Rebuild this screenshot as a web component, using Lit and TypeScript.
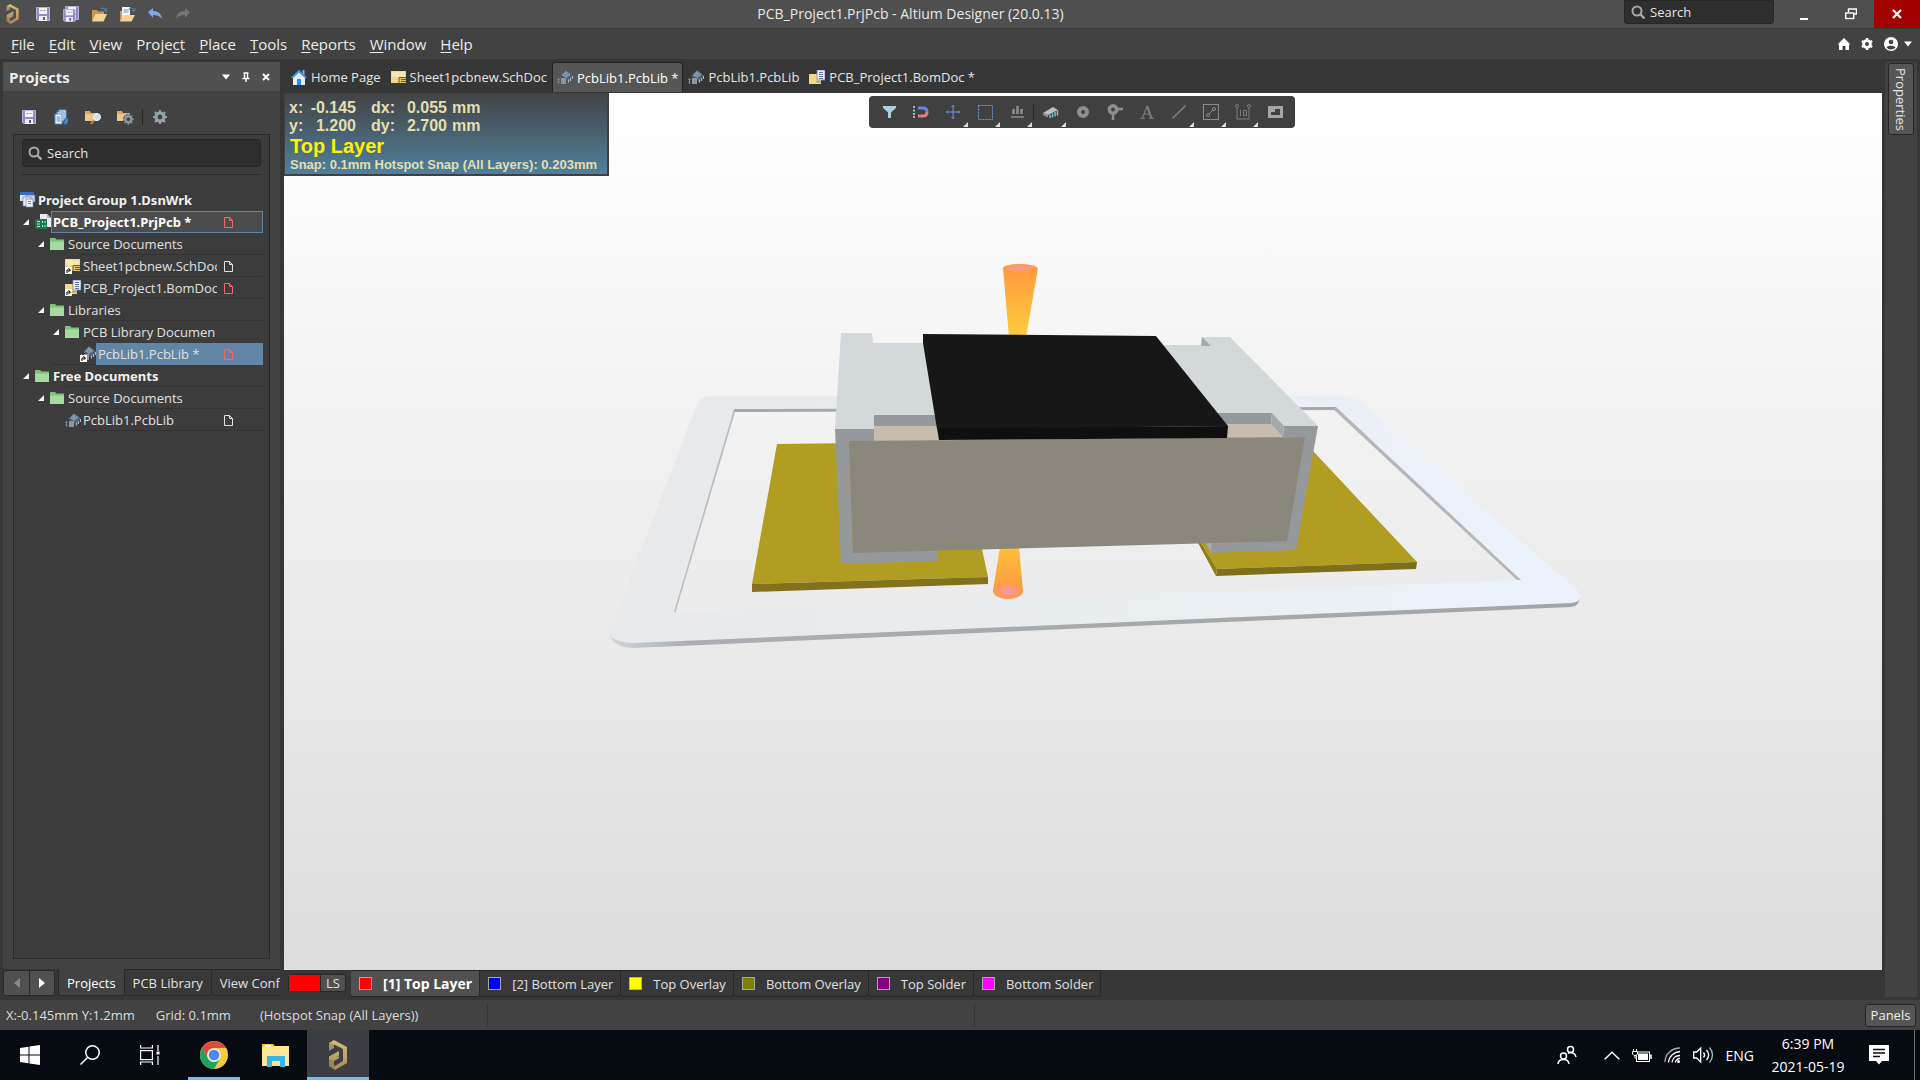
import { LitElement, html, svg, css, nothing, TemplateResult } from "lit";
import { customElement, property, state } from "lit/decorators.js";
import { classMap } from "lit/directives/class-map.js";
import { styleMap } from "lit/directives/style-map.js";

/* ---------- icons ---------- */

const icon = (w: number, h: number, body: unknown) =>
  html`<svg class="icon" width=${w} height=${h} viewBox="0 0 ${w} ${h}" aria-hidden="true">${body}</svg>`;

const altiumLogo = (w: number, h: number) => html`<svg class="icon" width=${w} height=${h} viewBox="0 0 19 30" aria-hidden="true">
  <defs><linearGradient id="gold" x1="0" y1="0" x2="0" y2="1"><stop offset="0" stop-color="#d6bd7c" /><stop offset="1" stop-color="#a88e52" /></linearGradient></defs>
  <path d="M0 3 5 0l13 7v16L6 30l-6-4v-5l10-5V11L0 16.500v4L1 21l9-5.500V18l-5 3v4l1 1 8-5V9L5 4.500V8L0 10.500z" fill="url(#gold)" />
  <path d="M0 3 5 4.500V8L0 10.500zM0 21l5 0v4l1 5-6-4z" fill="#8d7440" opacity=".55" />
</svg>`;

const floppy = svg`<path d="M0.500 0.500h13v13h-12l-1-1z" fill="#8f8bc4" stroke="#b5b2de" /><rect x="3" y="1" width="8" height="6" fill="#f3f3f6" /><rect x="4" y="3" width="6" height="1" fill="#b4b4c0" /><rect x="3" y="9" width="8" height="5" fill="#f1f1f4" /><rect x="7" y="10" width="2" height="3" fill="#5d5a86" />`;
const folderOpen = svg`<path d="M1 15V4h5l1 1.500h6V8" fill="#c69a55" /><path d="M1 15.500 4.500 8H16l-3.500 7.500z" fill="#f5d493" />`;
const arcArrow = svg`<path d="M10 3.500c2-2 4-1.500 5 .5M13 4.500l2.500 .5.500-2.500" fill="none" stroke="#4f7f9f" stroke-width="1.200" />`;
const folderSolid = svg`<path d="M0 2h5l1 2h7v8H0z" fill="#d9ac69" /><path d="M0 5h13v7H0z" fill="#ecc68a" />`;
const cog = (c: string) => svg`<circle cx="7" cy="7" r="4" fill="none" stroke=${c} stroke-width="3.200" /><path d="M7 0v2M7 12v2M0 7h2M12 7h2M2 2l1.500 1.500M10.500 10.500 12 12M2 12l1.500-1.500M10.500 3.500 12 2" stroke=${c} stroke-width="2.200" />`;
const chip = svg`<path d="M3 6 9 0l7 5.500-5.500 5.500z" fill="#4d6176" /><path d="M5 5 9 1l4.500 3.500L9.500 8z" fill="#8ba1b5" /><path d="m7 4 4 3M9 2.500l3.500 3" stroke="#5d7186" stroke-width=".8" /><path d="M11.500 9.500v3M13.500 8v3M15.500 6v3" stroke="#a7bccd" stroke-width="1.200" /><rect x="4" y="8" width="5" height="6" fill="#8f979e" /><path d="M0 9.500h3M0 12h3M1.500 8v6" stroke="#75808a" />`;
const sheet = svg`<rect x="0" y="1" width="15" height="12" fill="#f1d88d" /><rect x="1" y="2" width="13" height="5" fill="#f8e6b0" /><path d="M8 8h7v5H8z" fill="#e4c467" /><path d="M8 13V7.500h7M10 9.500h5M10 11.500h5" fill="none" stroke="#6a5b30" />`;
const bom = svg`<rect x="0" y="4" width="12" height="10" fill="#f1d88d" /><rect x="8" y="0" width="8" height="10" fill="#e9edf7" stroke="#7785b5" stroke-width=".8" /><path d="M10 2.500h4M10 4.500h4M10 6.500h4M10 8.500h4" stroke="#6676ad" /><path d="M7 12h5" stroke="#9d8848" />`;
const shortcut = svg`<rect x="0" y="9" width="7" height="7" fill="#fff" /><path d="M2 15v-3h3M3.500 10.500 5.500 12l-2 2" fill="none" stroke="#000" />`;
const greenFolder = svg`<path d="M0 1h5l1.500 1.500H14V13H0z" fill="#7fbf7b" /><path d="M0 4.500h14V13H0z" fill="#a5dba0" />`;

const icons: Record<string, TemplateResult> = {
  save: icon(14, 14, floppy),
  saveAll: icon(16, 16, svg`<g transform="translate(2 0)">${floppy}</g><g transform="translate(0 3) scale(.9)">${floppy}</g>`),
  open: icon(17, 17, svg`${folderOpen}${arcArrow}`),
  openProject: icon(17, 17, svg`<path d="M1 15V5h3v10z" fill="#c69a55" /><rect x="3" y="1" width="8" height="11" fill="#f4f6fa" /><path d="M4.500 4h5M4.500 6h5" stroke="#7a8fae" /><path d="M1 15.500 4.500 9H16l-3.500 6.500z" fill="#f5d493" />${arcArrow}`),
  undo: icon(16, 14, svg`<path d="M1 5 6 1v3c5 0 8 2 9 8-2-3-5-4-9-4v3z" fill="#7fa8e6" />`),
  redo: icon(16, 14, svg`<path d="M15 5 10 1v3C5 4 2 6 1 12c2-3 5-4 9-4v3z" fill="#757575" />`),
  lens: icon(14, 14, svg`<circle cx="6" cy="6" r="4.500" fill="none" stroke="#a8a8a8" stroke-width="2" /><path d="m9.500 9.500 4 4" stroke="#a8a8a8" stroke-width="2.400" />`),
  copyDocs: icon(14, 16, svg`<rect x="5" y="1" width="7" height="9" fill="#dcecfa" stroke="#5b91c6" /><rect x="3" y="3" width="7" height="9" fill="#e6f1fb" stroke="#5b91c6" /><rect x="1" y="5" width="7" height="10" fill="#f2f8fd" stroke="#4b86c0" /><path d="M2.500 8h4M2.500 10h4M2.500 12h4" stroke="#4b86c0" /><path d="M9 13h2V9.500h3V13l-3 3z" fill="#3c86d2" />`),
  folderFind: icon(17, 16, svg`${folderSolid}<circle cx="12" cy="8" r="3.500" fill="#cfe3f3" stroke="#eef5fa" /><path d="m9 11-3 4" stroke="#c08f4a" stroke-width="2" />`),
  folderCog: icon(17, 16, svg`${folderSolid}<g transform="translate(6 5) scale(.76)"><circle cx="7" cy="7" r="7" fill="#424242" />${cog("#8a989e")}</g>`),
  cog: icon(14, 14, cog("#93a3ab")),
  caret: icon(8, 6, svg`<path d="M0 .500h8L4 5.500z" fill="#fff" />`),
  pin: icon(8, 10, svg`<path d="M1.500 1h5M2.500 1v5M5.500 1v5M0.500 6.500h7M4 6v4" fill="none" stroke="#fff" stroke-width="1.400" />`),
  cross: icon(8, 8, svg`<path d="m1 1 6 6M7 1 1 7" stroke="#fff" stroke-width="2" />`),
  home: icon(16, 16, svg`<path d="M2 8v8h12V8L8 2z" fill="#e6eef7" /><path d="M11.500 1h2v5h-2z" fill="#7cb3ea" /><path d="M0 8.500 8 .5l8 8-1.500 1L8 3.500 1.500 9.500z" fill="#3f8fe0" /><rect x="6" y="10" width="4" height="6" fill="#2b8cf0" />`),
  chip: icon(16, 15, chip),
  sheet: icon(15, 14, sheet),
  bom: icon(16, 14, bom),
  chipLink: icon(16, 16, svg`${chip}${shortcut}`),
  sheetLink: icon(16, 16, svg`${sheet}${shortcut}`),
  bomLink: icon(16, 16, svg`${bom}${shortcut}`),
  folder: icon(16, 14, greenFolder),
  group: icon(16, 16, svg`<rect x="0" y="0" width="14" height="9" fill="#dce5f2" /><rect x="0" y="0" width="14" height="3" fill="#3d6cbe" /><rect x="6" y="3" width="9" height="7" fill="#c8d4e6" stroke="#5570a0" stroke-width=".6" /><rect x="3" y="5" width="8" height="9" fill="#eaf0f8" stroke="#6a84b0" stroke-width=".7" /><rect x="6" y="7" width="7" height="8" fill="#f4f7fb" stroke="#6a84b0" stroke-width=".7" /><path d="M8 9.500h3M8 11.500h3" stroke="#6a84b0" />`),
  project: icon(16, 16, svg`<path d="M5 0h7l4 4v9H5z" fill="#e9ecf5" /><path d="M12 0v4h4z" fill="#a9b2cf" /><rect x="0" y="5" width="12" height="10" fill="#14784f" /><path d="M2 7.500h3M2 10h3M2 12.500h3M7.500 7v2M10 7v2M7.500 11v2M10 11v2" fill="none" stroke="#cfe9dc" />`),
  doc: icon(9, 11, svg`<path d="M.5.500h5l3 3v7h-8z M5.500.500v3h3" fill="none" stroke="#e2e2e2" />`),
  docRed: icon(9, 11, svg`<path d="M.5.500h5l3 3v7h-8z M5.500.500v3h3" fill="none" stroke="#f06a6a" />`),
  twist: icon(6, 6, svg`<path d="M6 0v6H0z" fill="#f4f4f4" />`),
  filter: icon(13, 12, svg`<path d="M0 0h13v2L8 6.500V12H5V6.500L0 2z" fill="#a9d0e2" />`),
  magnet: icon(16, 12, svg`<path d="M0 0h2v2H0zM0 3.500h2v2H0zM0 7h2v2H0zM0 10h2v2H0z" fill="#9fb9c4" /><path d="M5 2h5c3 0 4 2 4 4" fill="none" stroke="#5f86e8" stroke-width="3" /><path d="M5 10h5c3 0 4-2 4-4" fill="none" stroke="#e87b84" stroke-width="3" />`),
  crosshair: icon(14, 14, svg`<path d="M7 0v14M0 7h14M5.500 2 7 .5 8.500 2M5.500 12 7 13.500 8.500 12M2 5.500.5 7 2 8.500M12 5.500 13.500 7 12 8.500" fill="none" stroke="#6e93e2" />`),
  marquee: icon(15, 15, svg`<rect x=".5" y=".5" width="14" height="14" fill="none" stroke="#6e93e2" stroke-dasharray="2 1" />`),
  align: icon(13, 12, svg`<path d="M0 11h13" stroke="#8b8b8b" stroke-width="1.500" /><path d="M2.500 3v5M6.500 0v8M10.500 3v5" stroke="#8b8b8b" stroke-width="2.600" />`),
  ic: icon(16, 12, svg`<path d="M0 7 10 1l5 3-10 5z" fill="#bcc0c4" /><path d="M0 7v2l5 2.500V9z" fill="#8e9499" /><path d="M7 8.500v3.500M9.500 7.500v4M12 6v4.500M14.500 4.500v5" stroke="#7fc4de" stroke-width="1.400" />`),
  pad: icon(12, 12, svg`<circle cx="6" cy="6" r="4" fill="none" stroke="#8f8f8f" stroke-width="4" />`),
  via: icon(16, 16, svg`<path d="M6 5h10M6 6v10" stroke="#8f8f8f" stroke-width="2.500" /><circle cx="6" cy="5.500" r="3.700" fill="#404040" stroke="#8f8f8f" stroke-width="3.500" />`),
  letter: icon(14, 14, svg`<path d="M7 1 2.500 13" stroke="#7c7c7c" stroke-width="1.200" /><path d="m7 1 4.500 12" stroke="#7c7c7c" stroke-width="2.200" /><path d="M4 9h6M0 13.300h5M9 13.300h5" stroke="#7c7c7c" />`),
  line: icon(14, 14, svg`<path d="M.5 13.500 13.500.5" stroke="#7c7c7c" stroke-width="1.600" />`),
  room: icon(16, 16, svg`<rect x=".5" y=".5" width="15" height="15" fill="none" stroke="#8b8b8b" /><circle cx="5" cy="11" r="1.500" fill="none" stroke="#8b8b8b" /><circle cx="11" cy="5" r="1.500" fill="none" stroke="#8b8b8b" /><path d="m6 10 4-4" stroke="#8b8b8b" />`),
  dimension: icon(16, 16, svg`<circle cx="2" cy="2" r="1.500" fill="none" stroke="#7c7c7c" /><circle cx="14" cy="2" r="1.500" fill="none" stroke="#7c7c7c" /><path d="M2 4v11h12V4M5.500 6v6M8.500 6.500h3v5h-3z" fill="none" stroke="#7c7c7c" />`),
  cutout: icon(15, 12, svg`<path d="M0 0h15v12H0zM7 3v3H3v3h9V3z" fill="#a5a5a5" fill-rule="evenodd" />`),
  minimize: icon(8, 12, svg`<path d="M0 11h8" stroke="#fff" stroke-width="2" />`),
  restore: icon(12, 12, svg`<path d="M3.500 4V1h8v5H9" fill="none" stroke="#fff" stroke-width="1.400" /><rect x=".7" y="5" width="8" height="5.500" fill="none" stroke="#fff" stroke-width="1.400" />`),
  close: icon(10, 10, svg`<path d="m1 1 8 8M9 1 1 9" stroke="#fff" stroke-width="2.200" />`),
  homeWhite: icon(12, 12, svg`<path d="M0 6 6 0l6 6-1 1v5H7.500V8h-3v4H1V7z" fill="#fff" />`),
  cogWhite: icon(12, 12, svg`<circle cx="6" cy="6" r="3.400" fill="none" stroke="#fff" stroke-width="2.800" /><path d="M6 0v3M6 9v3M.8 3l2.600 1.500M8.600 7.500 11.200 9M.8 9l2.600-1.500M8.600 4.500 11.200 3" stroke="#fff" stroke-width="2.400" />`),
  user: icon(14, 14, svg`<circle cx="7" cy="7" r="7" fill="#fff" /><circle cx="7" cy="5" r="2.300" fill="#424242" /><path d="M2.500 10.500c1-2.500 8-2.500 9 0-2 2.500-7 2.500-9 0z" fill="#424242" />`),
  left: icon(6, 10, svg`<path d="M6 0v10L0 5z" fill="#8a8a8a" />`),
  right: icon(6, 10, svg`<path d="M0 0v10l6-5z" fill="#fff" />`),
  windows: icon(20, 20, svg`<path d="m0 3 8.500-1.200V9.500H0zM9.500 1.600 20 0v9.500H9.500zM0 10.500h8.500v7.700L0 17zM9.500 10.500H20V20L9.500 18.400z" fill="#fff" />`),
  find: icon(20, 20, svg`<circle cx="12.500" cy="7.500" r="6.700" fill="none" stroke="#fff" stroke-width="1.500" /><path d="M7.500 12.500.5 19.500" stroke="#fff" stroke-width="1.500" />`),
  taskView: icon(20, 20, svg`<path d="M.6 0v3h11.800V0M.6 20v-3h11.800v3" fill="none" stroke="#fff" stroke-width="1.200" /><rect x=".6" y="5.600" width="11.800" height="9" fill="none" stroke="#fff" stroke-width="1.200" /><path d="M18 0v6M18 11v9" stroke="#fff" stroke-width="1.200" /><rect x="16.500" y="6.500" width="3" height="3" fill="#fff" />`),
  chrome: icon(28, 28, svg`<circle cx="14" cy="14" r="14" fill="#fbc940" /><path d="M1.900 7A14 14 0 0 1 26.100 7H14a7 7 0 0 0-6.100 10.500z" fill="#dc4b3e" /><path d="M1.900 7A14 14 0 0 0 14 28l6.100-10.500A7 7 0 0 1 7.900 17.500z" fill="#1da462" /><circle cx="14" cy="14" r="6.700" fill="#f1f1f1" /><circle cx="14" cy="14" r="5.300" fill="#4a8af4" />`),
  explorer: icon(28, 24, svg`<path d="M0 1h11l2 2v4H0z" fill="#f9c937" /><rect x="3" y="2" width="6" height="2" fill="#fff" /><path d="M0 4h11l2-1h14v20H0z" fill="#ffe594" /><path d="M5 24V13h18v11h-5v-6h-8v6z" fill="#3bb4e8" />`),
  people: icon(20, 20, svg`<g fill="none" stroke="#fff" stroke-width="1.500"><circle cx="6.500" cy="11" r="3" /><path d="M1 19c.5-6 10.500-6 11 0" /><circle cx="13.500" cy="4.500" r="3" /><path d="M11 8.500c3-2 7.500-.5 8 3.500" /></g>`),
  chevron: icon(16, 9, svg`<path d="m.7 8.300 7.300-7 7.300 7" fill="none" stroke="#fff" stroke-width="1.400" />`),
  battery: icon(20, 13, svg`<rect x="4.500" y="3" width="13" height="9.500" fill="none" stroke="#fff" /><rect x="6" y="4.500" width="10" height="6.500" fill="#fff" /><path d="M19 5.500v4.500" stroke="#fff" stroke-width="1.600" /><path d="M.5 2.500h5v2.500L4 6.500H2L.5 5zM1.500 0v3M4.500 0v3M3 6.500V9h2" fill="#070b12" stroke="#fff" />`),
  wifi: icon(17, 16, svg`<g fill="none" stroke-width="1.300"><path d="M1 15C1 7 8 1 16 1" stroke="#a9abae" /><path d="M4.500 15.500C5 9 10 5 16 4.500" stroke="#fff" /><path d="M8 15.500c.5-4 3.500-7 8-7" stroke="#fff" /><path d="M11.500 15.500c0-2 2-4 4.500-4" stroke="#fff" /></g><circle cx="14.500" cy="14.500" r="1.500" fill="#fff" />`),
  volume: icon(21, 18, svg`<path d="M.7 6h3l4-4v14l-4-4h-3z" fill="none" stroke="#fff" stroke-width="1.300" /><g fill="none" stroke="#fff" stroke-width="1.300"><path d="M10.500 6.500c1.300 1.500 1.300 3.500 0 5" /><path d="M13.500 4c2.600 3 2.600 7 0 10" /><path d="M16.500 1.500c4 4.500 4 10.500 0 15" stroke="#b5b7ba" /></g>`),
  notify: icon(20, 20, svg`<path d="M0 0h20v16h-7l-3 3.500L7 16H0z" fill="#fff" /><path d="M4 4.500h12M4 8h12M4 11.500h7" stroke="#0a0e15" stroke-width="1.300" />`),
};

/* ---------- shared look ---------- */

const base = css`
  * { box-sizing: border-box; }
  .icon { display: block; flex: none; }
  button, input {
    font: inherit;
    color: inherit;
    background: none;
    border: 0;
    padding: 0;
    margin: 0;
    white-space: nowrap;
  }
  input::placeholder { color: #e4e4e4; opacity: 1; }
  .search {
    display: flex;
    align-items: center;
    gap: 5px;
    background: #2e2e2e;
    border: 1px solid #262626;
    border-radius: 3px;
    color: #e4e4e4;
  }
  .search input { flex: 1; min-width: 0; outline: 0; }
`;

/* ---------- title bar and menu ---------- */

@customElement("title-bar")
class TitleBar extends LitElement {
  static styles = [base, css`
    :host { display: block; }
    .title {
      display: grid;
      grid-template-columns: auto 1fr auto;
      align-items: center;
      height: 28px;
      background: #4f4f4f;
      color: #e8e8e8;
    }
    .quick { display: flex; align-items: center; padding-left: 6px; }
    .quick button { width: 28px; height: 28px; display: grid; place-items: center; }
    .logo { width: 23px; }
    h1 { font-size: 14px; font-weight: 400; margin: 0; line-height: 28px; text-align: center; }
    .end { display: flex; align-self: stretch; align-items: flex-start; }
    .search { width: 150px; height: 24px; padding-left: 6px; margin-right: 6px; font-size: 13px; border-radius: 0 0 3px 3px; }
    .win { width: 47px; height: 28px; display: grid; place-items: center; }
    .close { background: #a00000; width: 46px; }
    .menu {
      display: flex;
      align-items: center;
      height: 31px;
      padding: 0 8px 0 11px;
      gap: 14px;
      background: #424242;
      border-top: 1px solid #363636;
      color: #ececec;
      font-size: 15px;
    }
    .menu u { text-underline-offset: 2px; text-decoration-thickness: 1px; }
    .tools { margin-left: auto; display: flex; align-items: center; gap: 11px; }
    .account { display: flex; align-items: center; gap: 6px; }
  `];

  private menus: [string, string, string][] = [
    ["", "F", "ile"], ["", "E", "dit"], ["", "V", "iew"], ["Proje", "c", "t"], ["", "P", "lace"],
    ["", "T", "ools"], ["", "R", "eports"], ["", "W", "indow"], ["", "H", "elp"],
  ];
  private quick: [string, string][] = [
    ["save", "Save"], ["saveAll", "Save all"], ["open", "Open"], ["openProject", "Open project"], ["undo", "Undo"], ["redo", "Redo"],
  ];

  render() {
    return html`
      <header class="title">
        <div class="quick">
          <div class="logo">${altiumLogo(14, 20)}</div>
          ${this.quick.map(([i, l]) => html`<button aria-label=${l}>${icons[i]}</button>`)}
        </div>
        <h1>PCB_Project1.PrjPcb - Altium Designer (20.0.13)</h1>
        <div class="end">
          <label class="search">${icons.lens}<input type="text" placeholder="Search" aria-label="Search" /></label>
          <button class="win" aria-label="Minimize">${icons.minimize}</button>
          <button class="win" aria-label="Restore">${icons.restore}</button>
          <button class="win close" aria-label="Close">${icons.close}</button>
        </div>
      </header>
      <nav class="menu">
        ${this.menus.map(([a, u, b]) => html`<button>${a}<u>${u}</u>${b}</button>`)}
        <div class="tools">
          <button aria-label="Home">${icons.homeWhite}</button>
          <button aria-label="Preferences">${icons.cogWhite}</button>
          <button class="account" aria-label="Account">${icons.user}${icons.caret}</button>
        </div>
      </nav>`;
  }
}

/* ---------- projects panel ---------- */

interface Node {
  level: number;
  icon: string;
  text: string;
  open?: boolean;
  bold?: boolean;
  mark?: "doc" | "docRed";
  look?: "framed" | "selected";
  rule?: number;
}

const tree: Node[] = [
  { level: 0, icon: "group", text: "Project Group 1.DsnWrk", bold: true },
  { level: 1, icon: "project", text: "PCB_Project1.PrjPcb *", bold: true, open: true, mark: "docRed", look: "framed" },
  { level: 2, icon: "folder", text: "Source Documents", open: true, rule: 4 },
  { level: 3, icon: "sheetLink", text: "Sheet1pcbnew.SchDoc", mark: "doc", rule: 4 },
  { level: 3, icon: "bomLink", text: "PCB_Project1.BomDoc", mark: "docRed", rule: 4 },
  { level: 2, icon: "folder", text: "Libraries", open: true, rule: 4 },
  { level: 3, icon: "folder", text: "PCB Library Documen", open: true },
  { level: 4, icon: "chipLink", text: "PcbLib1.PcbLib *", mark: "docRed", look: "selected", rule: 2 },
  { level: 1, icon: "folder", text: "Free Documents", bold: true, open: true, rule: 3 },
  { level: 2, icon: "folder", text: "Source Documents", open: true, rule: 4 },
  { level: 3, icon: "chip", text: "PcbLib1.PcbLib", mark: "doc", rule: 4 },
];

@customElement("projects-panel")
class ProjectsPanel extends LitElement {
  @state() private tab = "Projects";

  static styles = [base, css`
    :host {
      display: flex;
      flex-direction: column;
      width: 280px;
      padding: 3px 0 0 3px;
      color: #e0e0e0;
      font-size: 13px;
      min-height: 0;
    }
    .head {
      display: flex;
      align-items: center;
      gap: 12px;
      height: 29px;
      padding: 0 10px 0 6px;
      background: #505050;
    }
    h2 { font-size: 15px; margin: 0 auto 0 0; font-weight: 700; color: #ececec; }
    .body {
      flex: 1;
      min-height: 0;
      display: flex;
      flex-direction: column;
      background: #424242;
      padding: 12px 10px 10px;
    }
    .tools { display: flex; align-items: center; height: 28px; margin-bottom: 3px; }
    .tools button { width: 32px; height: 28px; display: grid; place-items: center; }
    .tools i { width: 1px; height: 16px; background: #262626; margin: 0 1px; }
    .box { flex: 1; border: 1px solid #2a2a2a; background: #3c3c3c; padding: 4px 6px 0; }
    .search { height: 28px; padding-left: 5px; margin: 0 2px; }
    .rule { border: 0; border-top: 1px solid #2a2a2a; margin: 7px 2px 14px; }
    ul { list-style: none; margin: 0; padding: 0; }
    .row {
      display: flex;
      align-items: center;
      width: 100%;
      height: 22px;
      text-align: left;
    }
    .twist { width: 15px; flex: none; padding-left: 3px; }
    .pic { width: 16px; height: 16px; flex: none; display: grid; place-items: center; }
    .cell {
      flex: 1;
      min-width: 0;
      height: 22px;
      display: flex;
      align-items: center;
      padding-left: 2px;
      border: 1px solid transparent;
      border-left: 0;
    }
    .name { flex: 1; min-width: 0; overflow: hidden; }
    .mark { width: 45px; padding-left: 7px; flex: none; }
    .bold { font-family: "Noto Sans", "Open Sans", sans-serif; font-weight: 700; color: #f0f0f0; }
    .framed { border: 1px solid #6285a5; background: #4c4c4c; color: #fff; padding-left: 1px; }
    .selected { background: #6285a5; border-color: #6285a5; }
    .line { height: 1px; margin-top: -1px; background: #333; }
    .tabs { display: flex; height: 31px; overflow: hidden; }
    .step {
      flex: none;
      display: grid;
      grid-template-columns: 1fr 1fr;
      width: 52px;
      height: 26px;
      margin: 1px 3px 0 0;
      background: #505050;
      border: 1px solid #282828;
      border-radius: 3px;
    }
    .step button { display: grid; place-items: center; }
    .step button + button { border-left: 1px solid #282828; }
    .tab {
      flex: none;
      height: 27px;
      padding: 0 8px;
      border: 1px solid #282828;
      border-left-width: 0;
      border-radius: 0 0 3px 3px;
      background: #383838;
    }
    .tab.on { background: #424242; border-top-color: #424242; border-left-width: 1px; color: #fff; }
  `];

  render() {
    return html`
      <div class="head">
        <h2>Projects</h2>
        <button aria-label="Panel menu">${icons.caret}</button>
        <button aria-label="Pin">${icons.pin}</button>
        <button aria-label="Close panel">${icons.cross}</button>
      </div>
      <div class="body">
        <div class="tools">
          ${["save", "copyDocs", "folderFind", "folderCog"].map((i) => html`<button aria-label=${i}>${icons[i]}</button>`)}
          <i></i>
          <button aria-label="Settings">${icons.cog}</button>
        </div>
        <div class="box">
          <label class="search">${icons.lens}<input type="text" placeholder="Search" aria-label="Search projects" /></label>
          <hr class="rule" />
          <ul role="tree">
            ${tree.map((n) => html`<li role="treeitem">
              <button class="row" style=${styleMap({ paddingLeft: `${Math.max(n.level - 1, 0) * 15}px` })}>
                ${n.level ? html`<span class="twist">${n.open ? icons.twist : nothing}</span>` : nothing}
                <span class="pic">${icons[n.icon]}</span>
                <span class=${classMap({ cell: true, bold: !!n.bold, [n.look ?? "plain"]: true })}>
                  <span class="name">${n.text}</span>
                  ${n.level ? html`<span class="mark">${n.mark ? icons[n.mark] : nothing}</span>` : nothing}
                </span>
              </button>
              ${n.rule ? html`<div class="line" style=${styleMap({ marginLeft: `${n.rule * 15 + 1}px` })}></div>` : nothing}
            </li>`)}
          </ul>
        </div>
      </div>
      <div class="tabs">
        <div class="step">
          <button aria-label="Previous tab">${icons.left}</button>
          <button aria-label="Next tab">${icons.right}</button>
        </div>
        ${["Projects", "PCB Library", "View Conf"].map((t) => html`
          <button class=${classMap({ tab: true, on: t === this.tab })} @click=${() => (this.tab = t)}>${t}</button>`)}
      </div>`;
  }
}

/* ---------- 3D view ---------- */

@customElement("board-view")
class BoardView extends LitElement {
  static styles = [base, css`
    :host {
      display: block;
      position: relative;
      overflow: hidden;
      min-height: 0;
      background: linear-gradient(#ffffff, #dddddd);
    }
    .scene { display: block; position: absolute; inset: 0; width: 100%; height: 100%; }
    .hud {
      position: absolute;
      left: 0;
      top: 0;
      width: 325px;
      height: 83px;
      padding: 6px 5px 0 4px;
      border: solid #404040;
      border-width: 0 2px 2px 1px;
      background: linear-gradient(#434343, #50809d);
      color: #e2dfb0;
      font: 700 16px/18px "Liberation Sans", Arial, sans-serif;
    }
    .coords { display: grid; grid-template-columns: 18px 49px 38px 53px auto; }
    .coords span { text-align: right; }
    .coords .delta { padding-left: 15px; }
    .coords em { font-style: normal; padding-left: 5px; }
    .layer { color: #fff200; font-size: 20px; line-height: 22px; padding-left: 1px; }
    .snap { font-size: 13px; line-height: 15px; padding-left: 1px; white-space: nowrap; }
    .bar {
      position: absolute;
      left: 585px;
      top: 3px;
      display: flex;
      height: 32px;
      padding: 0 4px;
      background: #404040;
      border-radius: 4px;
    }
    .bar button { position: relative; width: 32px; height: 32px; display: grid; place-items: center; }
    .bar .more::after {
      content: "";
      position: absolute;
      right: 1px;
      bottom: 1px;
      border-left: 5px solid transparent;
      border-bottom: 5px solid #dcdcdc;
    }
    .bar i { width: 1px; height: 16px; margin: 8px 1px 8px 0; background: #262626; }
  `];

  private tools: [string, boolean][] = [
    ["filter", false], ["magnet", false], ["crosshair", true], ["marquee", true], ["align", true],
    ["ic", true], ["pad", false], ["via", false], ["letter", false], ["line", true], ["room", true], ["dimension", true], ["cutout", false],
  ];

  render() {
    return html`
      <svg class="scene" viewBox="284 93 1598 877" preserveAspectRatio="xMidYMid slice" role="img" aria-label="Chip resistor footprint, 3D view">
        <defs>
          <linearGradient id="ring" x1="0" x2="1"><stop offset="0" stop-color="#e7e9eb" /><stop offset=".25" stop-color="#e8ebee" /><stop offset=".55" stop-color="#e9eef1" /><stop offset="1" stop-color="#edf3fc" /></linearGradient>
          <linearGradient id="edge" x1="0" x2="1"><stop offset="0" stop-color="#cdd4da" /><stop offset=".08" stop-color="#abafb3" /><stop offset=".6" stop-color="#a6a8aa" /><stop offset="1" stop-color="#a3a6a8" /></linearGradient>
          <linearGradient id="coneTop" x1="0" y1="0" x2="0" y2="1"><stop offset="0" stop-color="#ff9b40" /><stop offset=".4" stop-color="#ffae3e" /><stop offset="1" stop-color="#fccd3c" /></linearGradient>
          <linearGradient id="coneLow" x1="0" y1="0" x2="0" y2="1"><stop offset="0" stop-color="#fbbf3c" /><stop offset="1" stop-color="#ff9a40" /></linearGradient>
          <radialGradient id="glow"><stop offset="0" stop-color="#f896b4" /><stop offset="1" stop-color="#ff9b40" /></radialGradient>
        </defs>
        <path d="M610 634 Q612 647 633 648 L1571 607 Q1580 606 1580 596 L1570 600 L633 640 Z" fill="url(#edge)" />
        <path fill="url(#ring)" fill-rule="evenodd" d="M715 396 L1342 396 Q1354 396 1362 402 L1577 590 Q1586 601 1571 603 L634 643 Q606 642 611 629 L697 404 Q700 396 715 396 Z M734 409 L675 612 L1521 580 L1336 407 Z" />
        <polygon points="734,409 1336,407 1336,410 734,412" fill="#a6a8aa" />
        <polygon points="734,409 735,412 675.500,612 674,612" fill="#b9bdc0" />
        <polygon points="1336,407 1521,580 1517,580 1333,409" fill="#b4b6b7" />

        <polygon points="777,444 860,443 982,549 988,577 752,584" fill="#b19d22" />
        <polygon points="752,584 988,577 988,584 752,592" fill="#83711c" />
        <polygon points="1313,451 1417,562 1217,569 1200,541" fill="#b19d22" />
        <polygon points="1217,569 1417,562 1416,569 1216,576" fill="#7f6f18" />
        <polygon points="1197,541 1200,541 1217,569 1216,576" fill="#8d7d1c" />

        <polygon points="1000,547 1019,547 1023,591 993,591" fill="url(#coneLow)" />
        <ellipse cx="1008" cy="591" rx="15" ry="8" fill="url(#glow)" />
        <polygon points="1003,268 1038,268 1026,337 1009,337" fill="url(#coneTop)" />
        <ellipse cx="1020" cy="268" rx="17" ry="4" fill="url(#glow)" />

        <polygon points="841,333 872,333 873,343 925,343 937,415 874,415 874,429 835,429" fill="#d3d8db" />
        <polygon points="835,429 874,429 874,441 849,441 853,552 938,550 938,561 841,564" fill="#95999c" />
        <polygon points="874,415 937,415 937,426 874,426" fill="#95999c" />
        <polygon points="874,426 937,426 940,442 874,442" fill="#c7bdae" />

        <polygon points="1163,345 1201,345 1202,337 1230,337 1318,426 1284,426 1272,413 1218,413" fill="#d3d8db" />
        <polygon points="1202,337 1211,346 1201,346" fill="#a5aaad" />
        <polygon points="1215,413 1272,413 1271,424 1223,424" fill="#95999c" />
        <polygon points="1272,413 1284,426 1283,438 1271,424" fill="#a5a9ac" />
        <polygon points="1223,424 1271,424 1283,438 1226,438" fill="#c7bdae" />
        <polygon points="1284,426 1318,426 1296,550 1211,553 1211,540 1287,540 1304,437 1283,437" fill="#95999c" />
        <polygon points="1205,541 1212,541 1211,553" fill="#a9adb0" />

        <polygon points="849,441 1305,437 1287,541 853,553" fill="#8c877c" />
        <polygon points="923,334 1156,336 1228,426 937,429 923,343" fill="#171717" />
        <polygon points="937,428 1228,426 1227,438 939,440" fill="#0f0f0f" />
      </svg>
      <div class="hud">
        <div class="coords">
          <b>x:</b><span>-0.145</span><b class="delta">dx:</b><span>0.055</span><em>mm</em>
          <b>y:</b><span>1.200</span><b class="delta">dy:</b><span>2.700</span><em>mm</em>
        </div>
        <div class="layer">Top Layer</div>
        <div class="snap">Snap: 0.1mm Hotspot Snap (All Layers): 0.203mm</div>
      </div>
      <div class="bar" role="toolbar">
        ${this.tools.map(([i, more], n) => html`${n === 5 ? html`<i></i>` : nothing}<button class=${more ? "more" : ""} aria-label=${i}>${icons[i]}</button>`)}
      </div>`;
  }
}

/* ---------- layer strip ---------- */

@customElement("layer-strip")
class LayerStrip extends LitElement {
  @state() private active = 0;

  static styles = [base, css`
    :host { display: flex; height: 30px; padding-left: 4px; font-size: 13px; color: #e0e0e0; }
    .set { display: flex; height: 18px; margin: 4px 5px 0 0; border: 1px solid #282828; border-radius: 3px; background: #505050; }
    .set i { width: 32px; background: #f00; border-right: 1px solid #282828; }
    .set span { width: 24px; text-align: center; line-height: 16px; }
    .layer {
      display: flex;
      align-items: center;
      gap: 11px;
      height: 27px;
      padding: 0 7px 0 8px;
      border: 1px solid #262626;
      border-left-width: 0;
      border-radius: 0 0 3px 3px;
      background: #383838;
    }
    .on { background: #505050; font-size: 14px; font-weight: 700; color: #fff; }
    .swatch { width: 13px; height: 13px; border: 1px solid #a8a8a8; margin-bottom: 1px; }
  `];

  private layers: [string, string][] = [
    ["[1] Top Layer", "#ff0000"], ["[2] Bottom Layer", "#0000ff"], ["Top Overlay", "#ffff00"],
    ["Bottom Overlay", "#808000"], ["Top Solder", "#800080"], ["Bottom Solder", "#ff00ff"],
  ];

  render() {
    return html`
      <button class="set" aria-label="Layer sets"><i></i><span>LS</span></button>
      ${this.layers.map(([name, color], i) => html`
        <button class=${classMap({ layer: true, on: i === this.active })} @click=${() => (this.active = i)}>
          <span class="swatch" style=${styleMap({ background: color })}></span>${name}
        </button>`)}`;
  }
}

/* ---------- desktop task bar ---------- */

@customElement("task-bar")
class TaskBar extends LitElement {
  static styles = [base, css`
    :host { display: flex; height: 50px; background: #060a11; color: #fff; font-size: 14px; }
    button { display: grid; place-items: center; }
    .sys { width: 60px; height: 50px; }
    .apps { display: flex; margin-left: 3px; }
    .app { width: 62px; height: 50px; position: relative; }
    .run::after { content: ""; position: absolute; inset: auto 5px 0; height: 3px; background: #76b9ed; }
    .front { background: #3b3f43; }
    .front::after { left: 0; right: 0; }
    .tray { margin-left: auto; display: flex; align-items: center; gap: 12px; }
    .people { margin-right: 15px; }
    .clock { width: 80px; margin-left: 2px; line-height: 23px; text-align: center; }
    .note { margin: 0 13px 0 9px; }
    .desk { width: 6px; height: 50px; border-left: 1px solid #6e7175; }
  `];

  render() {
    return html`
      <button class="sys" aria-label="Start">${icons.windows}</button>
      <button class="sys" aria-label="Search">${icons.find}</button>
      <button class="sys" aria-label="Task view">${icons.taskView}</button>
      <div class="apps">
        <button class="app run" aria-label="Chrome">${icons.chrome}</button>
        <button class="app" aria-label="File Explorer">${icons.explorer}</button>
        <button class="app run front" aria-label="Altium Designer">${altiumLogo(19, 30)}</button>
      </div>
      <div class="tray">
        <button class="people" aria-label="People">${icons.people}</button>
        <button aria-label="Hidden icons">${icons.chevron}</button>
        <button aria-label="Battery">${icons.battery}</button>
        <button aria-label="Network">${icons.wifi}</button>
        <button aria-label="Volume">${icons.volume}</button>
        <button>ENG</button>
        <button class="clock"><span>6:39 PM</span><span>2021-05-19</span></button>
        <button class="note" aria-label="Notifications">${icons.notify}</button>
        <button class="desk" aria-label="Show desktop"></button>
      </div>`;
  }
}

/* ---------- page ---------- */

@customElement("app-root")
class AppRoot extends LitElement {
  @property({ type: Number }) current = 2;

  static styles = [base, css`
    :host {
      display: flex;
      flex-direction: column;
      min-height: 100vh;
      background: #363636;
      font-family: "Open Sans", "Noto Sans", "Segoe UI", sans-serif;
      color: #e4e4e4;
    }
    .work { flex: 1; min-height: 0; display: flex; }
    .main { flex: 1; min-width: 0; display: flex; flex-direction: column; margin-left: 4px; }
    .docs { display: flex; height: 34px; padding: 3px 0 0 2px; font-size: 13px; }
    .doc {
      display: flex;
      align-items: center;
      gap: 4px;
      height: 30px;
      padding: 0 4px;
      border: 1px solid transparent;
      border-radius: 3px 3px 0 0;
    }
    .doc.on { background: #565656; border-color: #222; border-bottom: 0; color: #fff; }
    board-view { flex: 1; }
    .rail { width: 38px; padding: 3px 3px 3px; display: flex; }
    .rail div { flex: 1; background: #424242; padding: 1px 3px; }
    .props {
      writing-mode: vertical-rl;
      width: 26px;
      height: 72px;
      font-size: 13px;
      line-height: 24px;
      text-align: center;
      background: #555;
      border: 1px solid #242424;
      border-radius: 3px;
    }
    .status {
      display: flex;
      align-items: center;
      height: 30px;
      padding: 0 4px 0 6px;
      background: #424242;
      font-size: 13px;
      color: #dcdcdc;
    }
    .status .fields { display: flex; width: 481px; align-items: center; }
    .status .pos { margin-right: 21px; }
    .status .grid { margin-right: 29px; }
    .status i { width: 1px; height: 24px; background: #363636; margin-right: 486px; }
    .status i:last-of-type { margin-right: auto; }
    .panels { width: 51px; height: 23px; border: 1px solid #242424; border-radius: 3px; background: #555; color: #eee; }
  `];

  private docs: [string, string][] = [
    ["home", "Home Page"], ["sheet", "Sheet1pcbnew.SchDoc"], ["chip", "PcbLib1.PcbLib *"], ["chip", "PcbLib1.PcbLib"], ["bom", "PCB_Project1.BomDoc *"],
  ];

  render() {
    return html`
      <title-bar></title-bar>
      <div class="work">
        <projects-panel></projects-panel>
        <div class="main">
          <div class="docs">
            ${this.docs.map(([i, t], n) => html`
              <button class=${classMap({ doc: true, on: n === this.current })} @click=${() => (this.current = n)}>${icons[i]}${t}</button>`)}
          </div>
          <board-view></board-view>
          <layer-strip></layer-strip>
        </div>
        <div class="rail"><div><button class="props">Properties</button></div></div>
      </div>
      <footer class="status">
        <div class="fields"><span class="pos">X:-0.145mm Y:1.2mm</span><span class="grid">Grid: 0.1mm</span><span>(Hotspot Snap (All Layers))</span></div>
        <i></i><i></i>
        <button class="panels">Panels</button>
      </footer>
      <task-bar></task-bar>`;
  }
}
